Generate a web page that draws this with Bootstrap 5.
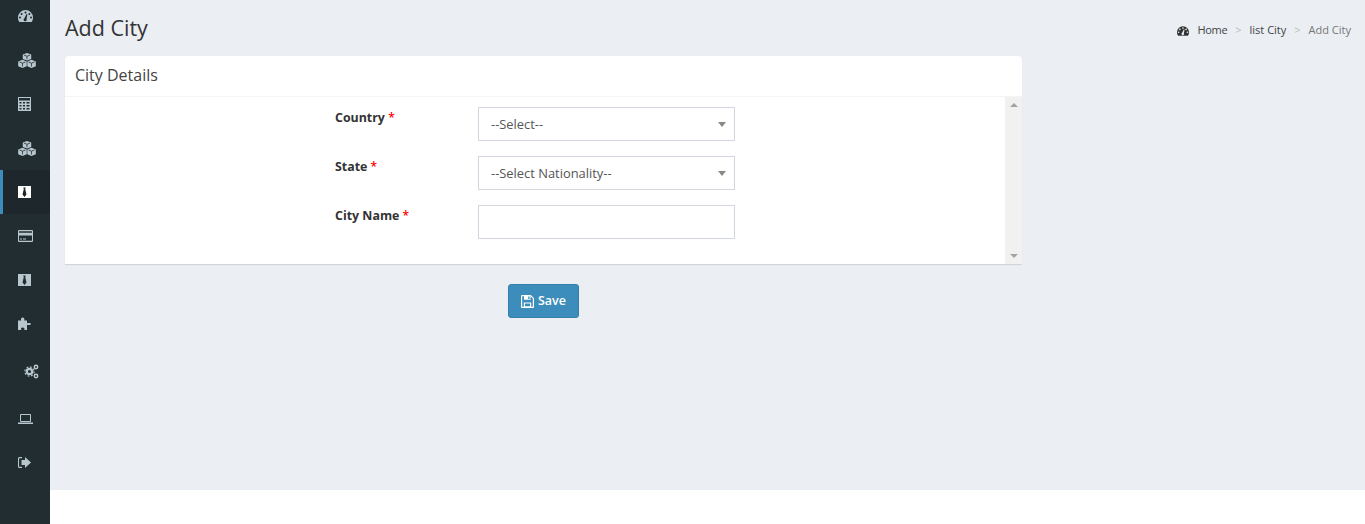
<!DOCTYPE html>
<html lang="en">
<head>
<meta charset="utf-8">
<title>Add City</title>
<link href="https://cdn.jsdelivr.net/npm/bootstrap@5.3.0/dist/css/bootstrap.min.css" rel="stylesheet">
<style>
html,body{height:524px;overflow:hidden}
body{background:#fff;font-family:"Open Sans","Noto Sans",sans-serif;font-size:13px;color:#333}
.shell{height:524px}
.sidemenu{width:50px;background:#222d32;height:524px;flex:none}
.sideitem{height:44px;width:50px;color:#b8c7ce;border-left:3px solid transparent;padding-left:15px}
.sideitem.first{height:38px;padding-top:0;padding-bottom:6px}
.sideitem.on{background:#1e282c;border-left-color:#3c8dbc;color:#fff}
.sideitem.puzzle{padding-bottom:2px}
.sideitem.cogs{height:50px;padding-left:21px;padding-top:1px}
.sideitem.lap{height:44px;padding-top:1px}
.sideitem svg{display:block}
.mainpane{height:490px;background:#ebeef3;padding:0 14px 0 15px}
.headrow{height:56px}
.pagetitle{font-size:21.5px;line-height:1;margin:0;color:#333;font-weight:400;padding-bottom:1px}
.crumbs{font-size:11px;padding-top:5px;color:#444}
.crumbs .sep{color:#bbb;margin:0 8px}
.crumbs .last{color:#777}
.crumbs .homelink{letter-spacing:-.3px}
.citycard{width:957px;background:#fff;border-radius:4px 4px 0 0;box-shadow:0 1px 1px rgba(0,0,0,.12)}
.cardhead{height:41px;border-bottom:1px solid #f4f4f4;padding:9px 10px 0;font-size:16px;line-height:21px;color:#444}
.cardbody{height:167px}
.formpane{padding:11px 0 0 270px}
.fieldrow{height:49px}
.fieldlabel{width:143px;font-weight:700;font-size:12.4px;line-height:20px;color:#333}
.fieldlabel b{color:red;font-weight:600;font-size:12px}
.fieldbox{width:257px;height:34px;border:1px solid #d2d6de;background:#fff;padding:0 8px 0 12px;color:#555;font-size:12.9px;margin-top:-1px}
.fieldbox span:first-child{padding-top:1px}
.caret-down{width:0;height:0;border:4px solid transparent;border-top:5px solid #888;border-bottom:0}
.fakebar{width:17px;background:#f1f1f1;padding:6px 0 6px}
.tri-up{width:0;height:0;border:4px solid transparent;border-bottom:4px solid #a3a3a3;border-top:0}
.tri-down{width:0;height:0;border:4px solid transparent;border-top:4px solid #a3a3a3;border-bottom:0}
.savewrap{padding:20px 0 0 443px}
.savebtn{width:71px;height:34px;background:#3c8dbc;border:1px solid #367fa9;border-radius:3px;color:#fff;font-weight:600;font-size:12.5px;padding:1px 0 0;line-height:1}
.savebtn:hover{background:#367fa9;color:#fff}
</style>
</head>
<body>
<svg width="0" height="0" class="d-none"><defs>
<symbol id="cubes-ico" viewBox="0 0 18 15"><path fill="currentColor" d="M9 0l4.200 1.600v4.400L9 7.600 4.800 6V1.600zM4.500 6.800l4.200 1.600v4.900L4.500 15 .2 13.300V8.400zM13.500 6.800l4.300 1.600v4.900L13.500 15l-4.200-1.700V8.400z"/><path fill="none" stroke="#222d32" stroke-width=".8" d="M6 2.100 9 3.300l3-1.200M9 3.300v3M1.500 9l3 1.200 3-1.200M4.500 10.200v3.300M10.500 9l3 1.200 3-1.200M13.500 10.200v3.300"/></symbol>
</defs></svg>
<div class="d-flex shell">
  <nav class="sidemenu d-flex flex-column">
    <div class="sideitem first d-flex align-items-center"><svg width="15" height="12" viewBox="0 0 15 12"><path fill="currentColor" fill-rule="evenodd" d="M7.500 0a7.500 7.500 0 0 1 7.500 7.500c0 1.700-.5 3.200-1.300 4.500H1.300C.5 10.700 0 9.200 0 7.500A7.500 7.500 0 0 1 7.500 0zM7.500 1.400a1 1 0 1 0 0 2 1 1 0 0 0 0-2zM3.600 3a1 1 0 1 0 0 2 1 1 0 0 0 0-2zM11.400 3a1 1 0 1 0 0 2 1 1 0 0 0 0-2zM2 6.600a1 1 0 1 0 0 2 1 1 0 0 0 0-2zM13 6.600a1 1 0 1 0 0 2 1 1 0 0 0 0-2zM8.500 4 6.400 8.300a1.600 1.600 0 1 0 2.200.6L9.400 4.200z"/></svg></div>
    <div class="sideitem d-flex align-items-center"><svg width="18" height="15"><use href="#cubes-ico"/></svg></div>
    <div class="sideitem d-flex align-items-center"><svg width="14" height="14" viewBox="0 0 14 14"><path fill="currentColor" fill-rule="evenodd" d="M0 0h13v14H0zM1 1v2.500h11V1zM1.500 5v1.500h2V5zM5 5v1.500h2V5zM8.500 5v1.500h3V5zM1.500 8v1.500h2V8zM5 8v1.500h2V8zM8.500 8v1.500h3V8zM1.500 11v1.500h2V11zM5 11v1.500h2V11zM8.500 11v1.500h3V11z"/></svg></div>
    <div class="sideitem d-flex align-items-center"><svg width="18" height="15"><use href="#cubes-ico"/></svg></div>
    <div class="sideitem on d-flex align-items-center"><svg width="13" height="12" viewBox="0 0 13 12"><path fill="#fff" d="M0 0h13v12H0z"/><path fill="#1e282c" d="M5.200 1.500h2.600l-.6 1.500 1.300 5.500-2 2.500-2-2.500L5.800 3z"/></svg></div>
    <div class="sideitem d-flex align-items-center"><svg width="15" height="12" viewBox="0 0 15 12"><path fill="currentColor" fill-rule="evenodd" d="M1 0h13a1 1 0 0 1 1 1v10a1 1 0 0 1-1 1H1a1 1 0 0 1-1-1V1a1 1 0 0 1 1-1zM1 1.200v1.600h13V1.200zM1 5.500V10.800h13V5.500zM2 8.500h2v1H2zM5 8.500h3v1H5z"/></svg></div>
    <div class="sideitem d-flex align-items-center"><svg width="13" height="12" viewBox="0 0 13 12"><path fill="currentColor" d="M0 0h13v12H0z"/><path fill="#222d32" d="M5.200 1.500h2.600l-.6 1.500 1.300 5.500-2 2.500-2-2.500L5.800 3z"/></svg></div>
    <div class="sideitem puzzle d-flex align-items-center"><svg width="14" height="13" viewBox="0 0 14 13"><path fill="currentColor" d="M0 3.500h3.200C2.700 2.500 3 .5 4.700.5s2 2 1.500 3H9V6.300c1-.6 4-.4 4 .7s-3 1.300-4 .7V13H6.300c.5-1.200.2-2.500-1.600-2.500S2.800 11.800 3.300 13H0z"/></svg></div>
    <div class="sideitem cogs d-flex align-items-center"><svg width="15" height="15" viewBox="0 0 15 15"><g fill="none" stroke="currentColor"><circle cx="5.500" cy="7.500" r="2.700" stroke-width="2.200"/><circle cx="5.500" cy="7.500" r="4.600" stroke-width="1.200" stroke-dasharray="1.800 1.800"/><circle cx="12" cy="3" r="1.700" stroke-width="1.500"/><circle cx="12" cy="12" r="1.700" stroke-width="1.500"/></g></svg></div>
    <div class="sideitem lap d-flex align-items-center"><svg width="15" height="10" viewBox="0 0 15 10"><path fill="none" stroke="currentColor" d="M2.500.5h10v7h-10z"/><path fill="currentColor" d="M0 8.500h15V10H0z"/></svg></div>
    <div class="sideitem d-flex align-items-center"><svg width="13" height="11" viewBox="0 0 13 11"><path fill="currentColor" d="M7 0l6 5.500L7 11V8H3.500V3H7z"/><path fill="none" stroke="currentColor" stroke-width="1.100" d="M4 .6H1.500a1 1 0 0 0-1 1v7.800a1 1 0 0 0 1 1H4"/></svg></div>
  </nav>
  <div class="flex-grow-1">
    <main class="mainpane">
      <div class="headrow d-flex justify-content-between align-items-center">
        <h1 class="pagetitle">Add City</h1>
        <div class="crumbs d-flex align-items-center">
          <svg class="me-2" width="12" height="10" viewBox="0 0 15 12"><path fill="#333" fill-rule="evenodd" d="M7.500 0a7.500 7.500 0 0 1 7.500 7.500c0 1.700-.5 3.200-1.300 4.500H1.300C.5 10.700 0 9.200 0 7.500A7.500 7.500 0 0 1 7.500 0zM7.500 1.400a1 1 0 1 0 0 2 1 1 0 0 0 0-2zM3.600 3a1 1 0 1 0 0 2 1 1 0 0 0 0-2zM11.400 3a1 1 0 1 0 0 2 1 1 0 0 0 0-2zM2 6.600a1 1 0 1 0 0 2 1 1 0 0 0 0-2zM13 6.600a1 1 0 1 0 0 2 1 1 0 0 0 0-2zM8.500 4 6.400 8.300a1.600 1.600 0 1 0 2.200.6L9.400 4.200z"/></svg>
          <span class="homelink">Home</span><span class="sep">&gt;</span><span>list City</span><span class="sep">&gt;</span><span class="last">Add City</span>
        </div>
      </div>
      <section class="citycard">
        <div class="cardhead">City Details</div>
        <div class="cardbody d-flex">
          <div class="formpane flex-grow-1">
            <div class="fieldrow d-flex">
              <div class="fieldlabel">Country <b>*</b></div>
              <div class="fieldbox d-flex justify-content-between align-items-center"><span>--Select--</span><span class="caret-down"></span></div>
            </div>
            <div class="fieldrow d-flex">
              <div class="fieldlabel">State <b>*</b></div>
              <div class="fieldbox d-flex justify-content-between align-items-center"><span>--Select Nationality--</span><span class="caret-down"></span></div>
            </div>
            <div class="fieldrow d-flex">
              <div class="fieldlabel">City Name <b>*</b></div>
              <div class="fieldbox"></div>
            </div>
          </div>
          <div class="fakebar d-flex flex-column justify-content-between align-items-center"><span class="tri-up"></span><span class="tri-down"></span></div>
        </div>
      </section>
      <div class="savewrap">
        <button type="button" class="btn savebtn d-inline-flex align-items-center justify-content-center gap-1"><svg width="13" height="13" viewBox="0 0 13 13"><path fill="none" stroke="#fff" stroke-width="1.200" d="M1.100.6h8.500l2.800 2.800v8.500a.5.500 0 0 1-.5.5H1.100a.5.500 0 0 1-.5-.5V1.100a.5.500 0 0 1 .5-.5z"/><path fill="#fff" d="M3 .8h6.500v4H3zM2.800 7.500h7.400v4.700H2.800z"/><path fill="#3c8dbc" d="M7.200 1.500h1.300v2.600H7.200zM4 8.600h5v2.600H4z"/></svg><span>Save</span></button>
      </div>
    </main>
  </div>
</div>
<script src="https://cdn.jsdelivr.net/npm/bootstrap@5.3.0/dist/js/bootstrap.bundle.min.js"></script>
</body>
</html>
